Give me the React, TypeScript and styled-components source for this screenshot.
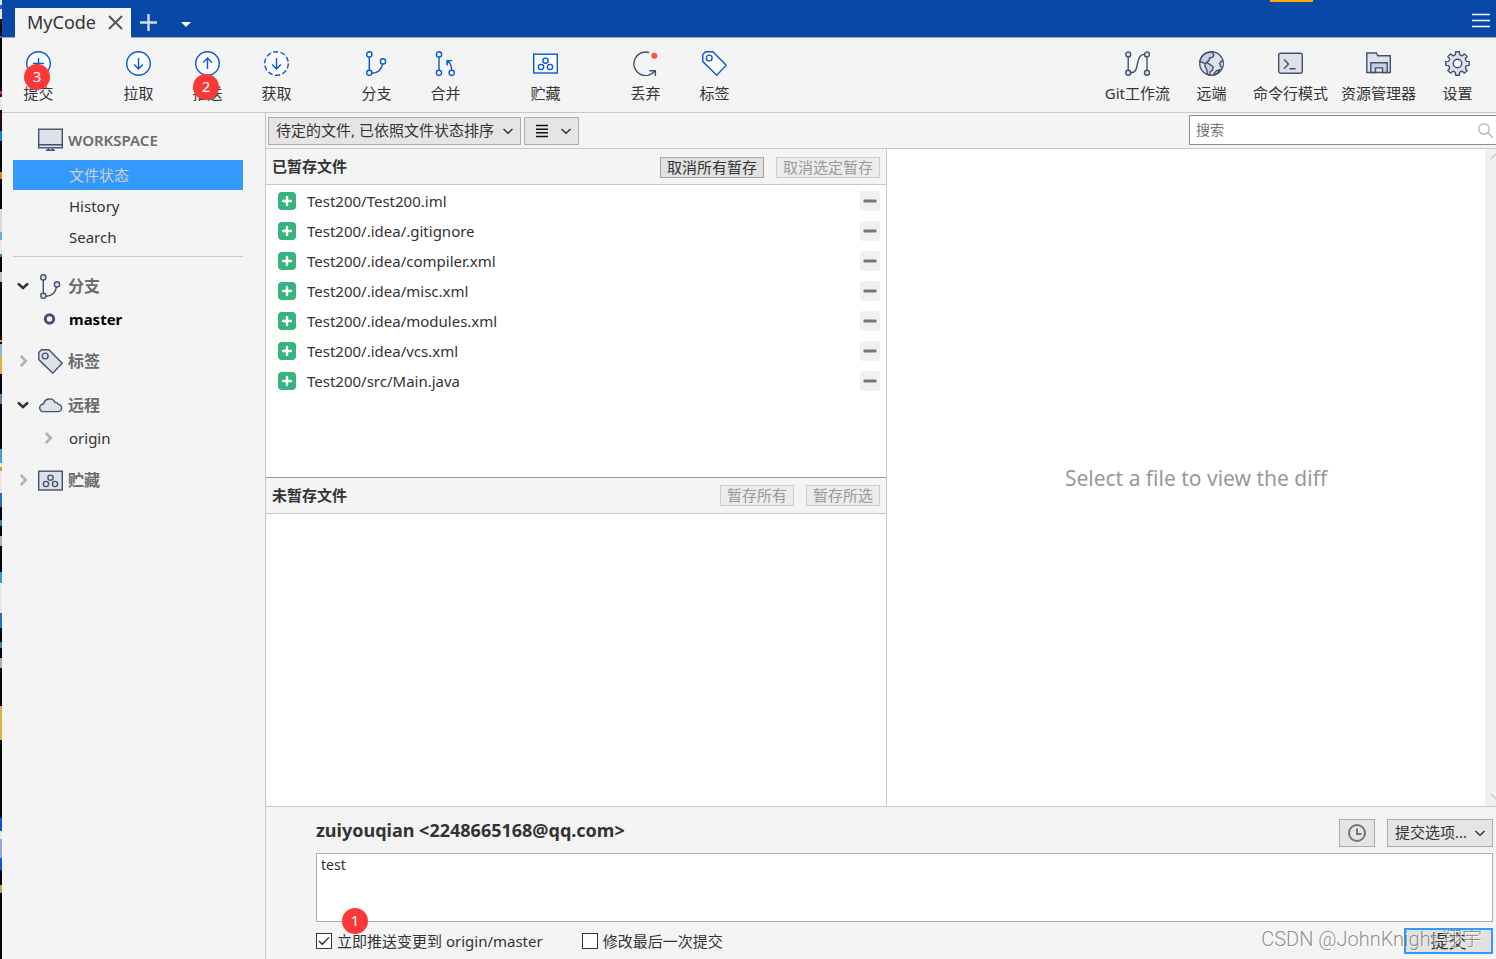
import React from 'react';
import styled, { createGlobalStyle, css } from 'styled-components';

const font = '"Noto Sans", "Noto Sans CJK SC", sans-serif';
const c = {
  brand: '#0747a6',
  panel: '#f4f4f4',
  line: '#c8c8c8',
  text: '#333333',
  muted: '#6b6b6b',
  control: '#e5e5e5',
  controlLine: '#acacac',
  blue: '#0b57d0',
  slate: '#42526e',
  slateFill: '#dfe1ea',
  select: '#3399ff',
  badge: '#fb3838',
};

const Global = createGlobalStyle`
  *, *::before, *::after { box-sizing: border-box; }
  body { margin: 0; background: ${c.panel}; color: ${c.text}; font: 15px/20px ${font}; }
  button, input, select, textarea { font: inherit; color: inherit; margin: 0; }
  button { cursor: pointer; }
  svg { display: block; flex: none; }
  ul { list-style: none; margin: 0; padding: 0; }
`;

const Screen = styled.div`
  display: flex;
  min-height: 100vh;
  overflow: hidden;
  position: relative;
`;

const DesktopEdge = styled.div`
  flex: none;
  width: 2px;
  background: linear-gradient(
    #e8e8e8 0 5px, #2b50ff 5px 9px, #e8e8e8 9px 19px, #04060f 19px 36px, #0a7fd0 36px 38px,
    #04060f 38px 91px, #f01890 91px 94px, #380818 94px 97px, #e8e8e8 97px 110px, #300818 110px 131px,
    #0a84d8 131px 141px, #04060f 141px 172px, #e08020 172px 179px, #04060f 179px 209px,
    #d8dcdc 209px 232px, #70a8d8 232px 240px, #e8e8e8 240px 254px, #20a050 254px 257px,
    #04060f 257px 272px, #b8c0c8 272px 282px, #04060f 282px 340px, #d8a020 340px 342px,
    #04060f 342px 344px, #8fb0e0 344px 356px, #e0b040 356px 374px, #04060f 374px 394px,
    #6080a0 394px 404px, #04060f 404px 449px, #40a0d8 449px 463px, #e8e8e8 463px 467px,
    #e0a020 467px 471px, #e8e8e8 471px 493px, #2a6cc0 493px 507px, #04060f 507px 520px,
    #4080b0 520px 526px, #04060f 526px 536px, #b0b0b0 536px 546px, #04060f 546px 572px,
    #30a0d0 572px 583px, #e8e8e8 583px 613px, #2a6cc0 613px 628px, #04060f 628px 642px,
    #4080b0 642px 648px, #04060f 648px 658px, #b0b0b0 658px 668px, #04060f 668px 706px,
    #e0b040 706px 740px, #04060f 740px 818px, #1050e0 818px 831px, #e8e8e8 831px 839px,
    #90a8e8 839px 858px, #1050e0 858px 870px, #04060f 870px 885px, #c0a060 885px 893px,
    #04060f 893px
  );
`;

const Window = styled.div`
  flex: 1;
  min-width: 0;
  display: flex;
  flex-direction: column;
`;

const TitleBar = styled.header`
  display: flex;
  align-items: flex-end;
  height: 38px;
  padding: 0 5px 0 13px;
  background: ${c.brand};
  border-bottom: 1px solid #a0aabb;
`;

const Tab = styled.div`
  display: flex;
  align-items: center;
  justify-content: space-between;
  width: 116px;
  height: 30px;
  margin-bottom: -1px;
  padding: 0 8px 2px 12px;
  background: ${c.panel};
  font-size: 18px;
`;

const BarButton = styled.button<{ $w: number }>`
  display: grid;
  place-items: center;
  width: ${(p) => p.$w}px;
  height: 29px;
  padding: 0;
  border: 0;
  background: none;
  color: #fff;
`;

const TabClose = styled(BarButton)`
  color: #555;
  height: 24px;
`;

const Spacer = styled.div`
  flex: 1;
`;

const DragMark = styled.span`
  position: absolute;
  top: 0;
  right: 183px;
  width: 43px;
  height: 2px;
  background: #ffab00;
`;

const Toolbar = styled.nav`
  display: flex;
  justify-content: space-between;
  height: 75px;
  padding: 0 4px 0 2px;
  border-bottom: 1px solid ${c.line};
`;

const ToolGroups = styled.div`
  display: flex;
  gap: 31px;
`;

const ToolGroup = styled.div<{ $gap?: number }>`
  display: flex;
  gap: ${(p) => p.$gap ?? 0}px;
`;

const ToolButton = styled.button`
  position: relative;
  display: flex;
  flex-direction: column;
  align-items: center;
  gap: 7px;
  min-width: 69px;
  padding: 13px 6px 0;
  border: 0;
  background: none;
  white-space: nowrap;
`;

const Badge = styled.span<{ $top: number; $left: number }>`
  position: absolute;
  top: ${(p) => p.$top}px;
  left: ${(p) => p.$left}px;
  width: 26px;
  height: 26px;
  border-radius: 50%;
  background: ${c.badge};
  color: #fff;
  font-size: 15px;
  line-height: 24px;
  text-align: center;
`;

const Body = styled.div`
  flex: 1;
  display: flex;
  min-height: 0;
`;

const Sidebar = styled.aside`
  flex: none;
  width: 264px;
  padding: 7px 22px 0 11px;
  border-right: 1px solid ${c.line};
`;

const SideHeading = styled.h2<{ $top?: number; $h?: number }>`
  display: grid;
  grid-template-columns: 25px 25px 1fr;
  align-items: center;
  column-gap: 0;
  height: ${(p) => p.$h ?? 30}px;
  margin: ${(p) => p.$top ?? 0}px 0 0;
  color: ${c.muted};
  font-size: 16px;
  font-weight: 600;
  line-height: 20px;

  & > span { padding-left: 5px; }
`;

const Workspace = styled(SideHeading)`
  font-size: 15px;
`;

const Toggle = styled.button`
  display: grid;
  place-items: center;
  width: 20px;
  height: 20px;
  padding: 0;
  border: 0;
  background: none;
`;

const SideLink = styled.a<{ $active?: boolean }>`
  display: block;
  height: 30px;
  margin-bottom: 1px;
  padding-left: 56px;
  line-height: 30px;
  color: ${c.text};
  text-decoration: none;
  ${(p) => p.$active && css`background: ${c.select}; color: #d0d0d0;`}
`;

const SideRule = styled.hr`
  height: 1px;
  margin: 4px 0 0;
  border: 0;
  background: ${c.line};
`;

const SideItem = styled.div<{ $bold?: boolean }>`
  display: grid;
  grid-template-columns: 25px 31px 1fr;
  align-items: center;
  height: 30px;
  margin-top: 3px;
  font-weight: ${(p) => (p.$bold ? 700 : 400)};
  color: ${(p) => (p.$bold ? '#000' : c.text)};

  & > :first-child { grid-column: 2; }
`;

const Main = styled.main`
  flex: 1;
  min-width: 0;
  display: flex;
  flex-direction: column;
`;

const FilterBar = styled.div`
  display: flex;
  align-items: flex-end;
  gap: 3px;
  height: 36px;
  padding: 0 0 3px 2px;
  border-bottom: 1px solid ${c.line};
`;

const SelectBox = styled.label<{ $w: number }>`
  display: grid;
  align-items: center;
  width: ${(p) => p.$w}px;
  height: 28px;

  & > * { grid-area: 1 / 1; }
  & > svg { justify-self: end; margin-right: 7px; pointer-events: none; }
`;

const Select = styled.select`
  appearance: none;
  width: 100%;
  height: 28px;
  padding: 0 20px 2px 7px;
  border: 1px solid ${c.controlLine};
  border-radius: 0;
  background: ${c.control};
`;

const PlainButton = styled.button<{ $w: number }>`
  display: flex;
  align-items: center;
  justify-content: center;
  width: ${(p) => p.$w}px;
  height: 28px;
  padding: 0;
  border: 1px solid ${c.controlLine};
  background: ${c.control};
`;

const ViewButton = styled(PlainButton)`
  justify-content: space-between;
  padding: 0 6px 0 11px;
`;

const SearchBox = styled.label`
  display: flex;
  align-items: center;
  width: 307px;
  height: 30px;
  padding: 0 3px 0 6px;
  border: 1px solid #8f8f8f;
  border-right: 0;
  background: #fff;
`;

const SearchInput = styled.input`
  flex: 1;
  min-width: 0;
  padding: 0;
  border: 0;
  outline: 0;
  background: none;
  font-size: 14px;
  &::placeholder { color: #757575; opacity: 1; }
`;

const Split = styled.div`
  flex: 1;
  display: grid;
  grid-template-columns: 621fr 609fr;
`;

const FilesPane = styled.div`
  display: grid;
  grid-template-rows: 1fr 1fr;
  border-right: 1px solid ${c.line};
`;

const FileSection = styled.section<{ $rule?: boolean }>`
  background: #fff;
  border-bottom: ${(p) => (p.$rule ? '1px solid #999' : '0')};
`;

const SectionHead = styled.header`
  display: flex;
  align-items: center;
  gap: 12px;
  height: 36px;
  padding: 1px 6px 0;
  background: ${c.panel};
  border-bottom: 1px solid ${c.line};
`;

const SectionTitle = styled.h3`
  flex: 1;
  margin: 0;
  padding-bottom: 2px;
  font-size: 15px;
  font-weight: 700;
  line-height: 20px;
`;

const StageButton = styled.button`
  height: 21px;
  padding: 0 6px;
  border: 1px solid #a5a5a5;
  background: #e1e1e1;
  line-height: 19px;
  white-space: nowrap;

  &:disabled {
    border-color: #cccccc;
    background: #ececec;
    color: #999;
  }
`;

const FileList = styled.ul`
  padding: 1px 6px 0 12px;
`;

const FileRow = styled.li`
  display: flex;
  align-items: center;
  height: 30px;
  gap: 11px;
  & > span { flex: 1; }
`;

const MinusButton = styled.button`
  display: grid;
  place-items: center;
  width: 20px;
  height: 20px;
  padding: 0;
  border: 0;
  border-radius: 3px;
  background: #f0f0f0;
`;

const DiffPane = styled.section`
  display: flex;
  background: #fff;
  overflow: hidden;
`;

const DiffHint = styled.p`
  flex: 1;
  align-self: center;
  margin: 0;
  padding-left: 20px;
  color: #999;
  font-size: 21px;
  line-height: 28px;
  text-align: center;
`;

const ScrollTrack = styled.div`
  display: flex;
  flex-direction: column;
  justify-content: space-between;
  width: 11px;
  padding: 4px 0 6px 6px;
  background: #f0f0f0;
`;

const Commit = styled.form`
  display: flex;
  flex-direction: column;
  gap: 6px;
  padding: 12px 3px 5px 50px;
  border-top: 1px solid ${c.line};
`;

const CommitRow = styled.div`
  display: flex;
  align-items: center;
  gap: 12px;
`;

const Author = styled.strong`
  flex: 1;
  font-size: 18px;
  line-height: 22px;
  padding-bottom: 6px;
`;

const MessageWrap = styled.div`
  position: relative;
  display: grid;
`;

const Message = styled.textarea`
  height: 69px;
  padding: 1px 4px;
  border: 1px solid #abadb3;
  background: #fff;
  resize: none;
  outline: 0;
  font-size: 14px;
  line-height: 20px;
`;

const OptionRow = styled.div`
  display: flex;
  align-items: center;
  justify-content: space-between;
  position: relative;
`;

const Options = styled.div`
  display: flex;
  gap: 39px;
`;

const CheckLabel = styled.label`
  display: flex;
  align-items: center;
  gap: 5px;
`;

const CheckBox = styled.span`
  display: grid;
  width: 16px;
  height: 16px;
  & > * { grid-area: 1 / 1; }
  & > svg { pointer-events: none; visibility: hidden; }
  & > input:checked + svg { visibility: visible; }
`;

const CheckInput = styled.input`
  appearance: none;
  width: 16px;
  height: 16px;
  border: 1px solid #333;
  background: #fff;
`;

const SubmitButton = styled.button`
  width: 89px;
  height: 26px;
  padding: 0;
  border: 2px solid ${c.select};
  background: #e1e1e1;
  font-size: 18px;
  line-height: 22px;
`;

const Watermark = styled.span`
  position: absolute;
  right: 11px;
  top: -1px;
  color: rgba(130, 130, 130, 0.9);
  font: 300 20px/24px Roboto, "Noto Sans CJK SC", sans-serif;
  text-shadow: 1px 1px 0 rgba(255, 255, 255, 0.8);
  white-space: nowrap;
  pointer-events: none;
`;

type IconProps = { tone?: 'blue' | 'slate'; size?: number };

function Icon({ tone = 'blue', size = 25, children }: IconProps & { children: React.ReactNode }) {
  return (
    <svg
      width={size}
      height={size}
      viewBox="0 0 25 25"
      fill={tone === 'blue' ? '#fbfcff' : c.slateFill}
      stroke={tone === 'blue' ? c.blue : c.slate}
      strokeWidth="1.4"
      aria-hidden="true"
    >
      {children}
    </svg>
  );
}

const CommitIcon = () => (
  <Icon><circle cx="12.5" cy="12.5" r="11.8" /><path d="M12.5 7v11M7 12.5h11" /></Icon>
);
const PullIcon = () => (
  <Icon><circle cx="12.5" cy="12.5" r="11.8" /><path fill="none" d="M12.5 7v11M8.2 13.6l4.3 4.3 4.3-4.3" /></Icon>
);
const PushIcon = () => (
  <Icon><circle cx="12.5" cy="12.5" r="11.8" /><path fill="none" d="M12.5 18V7M8.2 11.4l4.3-4.3 4.3 4.3" /></Icon>
);
const FetchIcon = () => (
  <Icon>
    <circle cx="12.5" cy="12.5" r="11.8" strokeDasharray="5 2.41" />
    <path fill="none" d="M12.5 7v11M8.2 13.6l4.3 4.3 4.3-4.3" />
  </Icon>
);
const BranchIcon = ({ tone }: IconProps) => (
  <Icon tone={tone}>
    <path fill="none" d="M5.3 5.8v13.8M7.9 22.3c5.6 0 10-3.6 10.6-9.5" />
    <circle cx="5.3" cy="3.4" r="2.6" /><circle cx="5.3" cy="21.8" r="2.6" /><circle cx="19" cy="10.4" r="2.6" />
  </Icon>
);
const MergeIcon = () => (
  <Icon>
    <path fill="none" d="M6 5.8v13.8M18.7 19.4c0-3.8-1.4-7.2-4-9.2M14.2 14.6V9.6h5" />
    <path fill={c.blue} stroke="none" d="M13.7 9.2h4l-4 4z" />
    <circle cx="6" cy="3.4" r="2.6" /><circle cx="6" cy="21.8" r="2.6" /><circle cx="18.7" cy="21.8" r="2.6" />
  </Icon>
);
const StashIcon = ({ tone }: IconProps) => (
  <Icon tone={tone}>
    <rect x="0.7" y="3.2" width="23.6" height="18.8" />
    <circle cx="12.5" cy="9.7" r="2.6" /><circle cx="8" cy="16" r="2.6" /><circle cx="17" cy="16" r="2.6" />
  </Icon>
);
const DiscardIcon = () => (
  <Icon tone="slate">
    <path fill="none" d="M16.2 1.5A11.8 11.8 0 1 0 22 20M16.4 19.7h6v5.3" />
    <circle cx="21.3" cy="4.7" r="3" fill="#ff5630" stroke="none" />
  </Icon>
);
const TagIcon = ({ tone }: IconProps) => (
  <Icon tone={tone}>
    <path d="M.8 3.4 3.6.8h7.2L24.2 14.2l-9.4 10L.8 10.6z" />
    <circle cx="7.2" cy="7" r="2.9" />
  </Icon>
);
const FlowIcon = () => (
  <Icon tone="slate">
    <path fill="none" d="M3.2 5.8v13.8M22 5.8v13.8M5.7 21.8c5.8 0 5.8-5 6.8-9.3s1.8-9 7-9.1" />
    <circle cx="3.2" cy="3.4" r="2.5" /><circle cx="3.2" cy="21.8" r="2.5" />
    <circle cx="22" cy="3.4" r="2.5" /><circle cx="22" cy="21.8" r="2.5" />
  </Icon>
);
const GlobeIcon = () => (
  <Icon tone="slate">
    <circle cx="12.5" cy="12.5" r="11.8" />
    <path fill="#c9cede" d="M6.5 2.3 13 .8l1.8 3-1 2.4-3.3.8-.4 2.4-2.7 2.2 2.2 1 4.6 3.2-.6 3.2-2.4 1.6-.6 3.4-2.2-.6-.6-5-2-3.2.6-2.6L1 10.5C1.6 7 3.6 4 6.5 2.3z" />
    <path fill="#c9cede" d="M24 10.2h-1.8l-1.4 2.2.8 3 1.8.8M15 22.5l2.4-2.6 3.4-1.2-2.6 3.8-3.2 1.6z" />
  </Icon>
);
const TerminalIcon = () => (
  <Icon tone="slate">
    <rect x="0.7" y="2.2" width="23.6" height="20" rx="2" />
    <path fill="none" d="m6 8.5 4.5 4.6L6 17.7M11.5 17.7h6" />
  </Icon>
);
const FolderIcon = () => (
  <Icon tone="slate">
    <path d="M.8 21.5V2h9.6l1.4 2.8h12.5v16.7z" />
    <path fill="#c9cede" d="M4.8 21.5v-9.8h16.4v9.8h-4.7v-4.6h-7v4.6z" />
  </Icon>
);

// Eight teeth: each spans 45 degrees, with a raised part and a valley.
const gearPath =
  Array.from({ length: 8 }, (_, i) => {
    const at = (deg: number, r: number) => {
      const a = ((i * 45 + deg) * Math.PI) / 180;
      return `${(12.5 + r * Math.sin(a)).toFixed(2)} ${(12.5 - r * Math.cos(a)).toFixed(2)}`;
    };
    return `${i ? 'L' : 'M'}${at(-13, 9.4)}L${at(-9, 11.9)}L${at(9, 11.9)}L${at(13, 9.4)}Q${at(22.5, 8)} ${at(32, 9.4)}`;
  }).join('') + 'z';

const GearIcon = () => (
  <Icon tone="slate"><path d={gearPath} strokeLinejoin="round" /><circle cx="12.5" cy="12.5" r="4.2" fill="#fff" /></Icon>
);
const MonitorIcon = () => (
  <Icon tone="slate">
    <rect x="0.7" y="1.2" width="23.6" height="18.6" />
    <path fill="none" d="M.7 16.7h23.6M8 22.3h9M10.5 20v2M14.5 20v2" />
  </Icon>
);
const CloudIcon = () => (
  <Icon tone="slate">
    <path d="M5.4 18.6h14.2a3.7 3.7 0 0 0 .6-7.4 3 3 0 0 0-3.2-1.8A6 6 0 0 0 5.6 11a3.8 3.8 0 0 0-.2 7.6z" />
  </Icon>
);

const Chevron = ({ open, small }: { open?: boolean; small?: boolean }) => (
  <svg width="12" height="12" viewBox="0 0 12 12" fill="none" stroke={open ? '#333' : '#b0b0b0'} strokeWidth={small ? 1.5 : 2.5} aria-hidden="true">
    <path d={open ? (small ? 'M1.5 4 6 8.2 10.5 4' : 'M1 3.5 6 8l5-4.5') : 'M3.8 1 8.8 6l-5 5'} />
  </svg>
);

const AddedIcon = () => (
  <svg width="18" height="18" viewBox="0 0 18 18" aria-hidden="true">
    <rect width="18" height="18" rx="4" fill="#36b37e" />
    <path d="M9 5v8M5 9h8" stroke="#fff" strokeWidth="2.4" strokeLinecap="round" />
  </svg>
);

const leftTools = [
  [{ label: '提交', icon: <CommitIcon />, badge: { n: 3, top: 26, left: 20 } }],
  [
    { label: '拉取', icon: <PullIcon /> },
    { label: '推送', icon: <PushIcon />, badge: { n: 2, top: 36, left: 20 } },
    { label: '获取', icon: <FetchIcon /> },
  ],
  [{ label: '分支', icon: <BranchIcon /> }, { label: '合并', icon: <MergeIcon /> }],
  [{ label: '贮藏', icon: <StashIcon /> }],
  [{ label: '丢弃', icon: <DiscardIcon /> }, { label: '标签', icon: <TagIcon /> }],
] as { label: string; icon: React.ReactNode; badge?: { n: number; top: number; left: number } }[][];

const rightTools = [
  { label: 'Git工作流', icon: <FlowIcon /> },
  { label: '远端', icon: <GlobeIcon /> },
  { label: '命令行模式', icon: <TerminalIcon /> },
  { label: '资源管理器', icon: <FolderIcon /> },
  { label: '设置', icon: <GearIcon /> },
];

const files = [
  'Test200/Test200.iml',
  'Test200/.idea/.gitignore',
  'Test200/.idea/compiler.xml',
  'Test200/.idea/misc.xml',
  'Test200/.idea/modules.xml',
  'Test200/.idea/vcs.xml',
  'Test200/src/Main.java',
];

function SideSection({ label, icon, open, top }: { label: string; icon: React.ReactNode; open?: boolean; top: number }) {
  return (
    <SideHeading $top={top}>
      <Toggle type="button" aria-label={label} aria-expanded={!!open}><Chevron open={open} /></Toggle>
      {icon}
      <span>{label}</span>
    </SideHeading>
  );
}

function Check({ label, checked }: { label: string; checked?: boolean }) {
  return (
    <CheckLabel>
      <CheckBox>
        <CheckInput type="checkbox" defaultChecked={checked} />
        <svg width="16" height="16" viewBox="0 0 16 16" fill="none" stroke="#222" strokeWidth="1.3" aria-hidden="true">
          <path d="m3 8 3.2 3.3L13 4.4" />
        </svg>
      </CheckBox>
      {label}
    </CheckLabel>
  );
}

export default function App() {
  return (
    <Screen>
      <Global />
      <DesktopEdge />
      <Window>
        <TitleBar>
          <Tab>
            MyCode
            <TabClose type="button" $w={15} aria-label="关闭">
              <svg width="15" height="15" viewBox="0 0 15 15" stroke="currentColor" strokeWidth="2"><path d="m1 1 13 13M14 1 1 14" /></svg>
            </TabClose>
          </Tab>
          <BarButton type="button" $w={35} aria-label="新建">
            <svg width="17" height="17" viewBox="0 0 17 17" stroke="#cfdcf2" strokeWidth="2.4"><path d="M8.5 0v17M0 8.5h17" /></svg>
          </BarButton>
          <BarButton type="button" $w={39} aria-label="更多">
            <svg width="10" height="8" viewBox="0 0 10 8" fill="#fff"><path d="M0 3h10L5 8z" /></svg>
          </BarButton>
          <Spacer />
          <BarButton type="button" $w={20} aria-label="菜单">
            <svg width="18" height="19" viewBox="0 0 18 19" stroke="#fff" strokeWidth="1.5"><path d="M0 1.5h18M0 7.5h18M0 13.5h18" /></svg>
          </BarButton>
        </TitleBar>
        <DragMark />

        <Toolbar>
          <ToolGroups>
            {leftTools.map((group, i) => (
              <ToolGroup key={i}>
                {group.map((t) => (
                  <ToolButton type="button" key={t.label}>
                    {t.icon}
                    {t.label}
                    {t.badge && <Badge $top={t.badge.top} $left={t.badge.left}>{t.badge.n}</Badge>}
                  </ToolButton>
                ))}
              </ToolGroup>
            ))}
          </ToolGroups>
          <ToolGroup $gap={1}>
            {rightTools.map((t) => (
              <ToolButton type="button" key={t.label}>{t.icon}{t.label}</ToolButton>
            ))}
          </ToolGroup>
        </Toolbar>

        <Body>
          <Sidebar>
            <Workspace $h={40}><i /><MonitorIcon /><span>WORKSPACE</span></Workspace>
            <SideLink href="#status" $active>文件状态</SideLink>
            <SideLink href="#history">History</SideLink>
            <SideLink href="#search">Search</SideLink>
            <SideRule />
            <SideSection label="分支" icon={<BranchIcon tone="slate" />} open top={14} />
            <SideItem $bold>
              <svg width="24" height="14" viewBox="0 0 24 14" fill="none" stroke={c.slate} strokeWidth="3"><circle cx="11.5" cy="7" r="4.2" /></svg>
              master
            </SideItem>
            <SideSection label="标签" icon={<TagIcon tone="slate" />} top={12} />
            <SideSection label="远程" icon={<CloudIcon />} open top={14} />
            <SideItem>
              <Toggle type="button" aria-label="origin" aria-expanded={false}><Chevron /></Toggle>
              origin
            </SideItem>
            <SideSection label="贮藏" icon={<StashIcon tone="slate" />} top={12} />
          </Sidebar>

          <Main>
            <FilterBar>
              <SelectBox $w={253}>
                <Select aria-label="排序"><option>待定的文件, 已依照文件状态排序</option></Select>
                <Chevron open small />
              </SelectBox>
              <ViewButton type="button" $w={55} aria-label="列表视图">
                <svg width="12" height="14" viewBox="0 0 12 14" stroke="#111" strokeWidth="1.4"><path d="M0 1.5h12M0 5.2h12M0 8.8h12M0 12.5h12" /></svg>
                <Chevron open small />
              </ViewButton>
              <Spacer />
              <SearchBox>
                <SearchInput type="text" placeholder="搜索" aria-label="搜索" />
                <svg width="15" height="15" viewBox="0 0 15 15" fill="none" stroke="#b8b8b8" strokeWidth="1.4" aria-hidden="true"><circle cx="6" cy="6" r="5.2" /><path d="m9.8 9.8 4.8 4.8" /></svg>
              </SearchBox>
            </FilterBar>

            <Split>
              <FilesPane>
                <FileSection $rule>
                  <SectionHead>
                    <SectionTitle>已暂存文件</SectionTitle>
                    <StageButton type="button">取消所有暂存</StageButton>
                    <StageButton type="button" disabled>取消选定暂存</StageButton>
                  </SectionHead>
                  <FileList>
                    {files.map((f) => (
                      <FileRow key={f}>
                        <AddedIcon />
                        <span>{f}</span>
                        <MinusButton type="button" aria-label={`取消暂存 ${f}`}>
                          <svg width="14" height="4" viewBox="0 0 14 4"><rect x="0.5" y="0.5" width="13" height="3" rx="1" fill="#757575" /></svg>
                        </MinusButton>
                      </FileRow>
                    ))}
                  </FileList>
                </FileSection>
                <FileSection>
                  <SectionHead>
                    <SectionTitle>未暂存文件</SectionTitle>
                    <StageButton type="button" disabled>暂存所有</StageButton>
                    <StageButton type="button" disabled>暂存所选</StageButton>
                  </SectionHead>
                </FileSection>
              </FilesPane>
              <DiffPane>
                <DiffHint>Select a file to view the diff</DiffHint>
                <ScrollTrack>
                  <svg width="5" height="7" viewBox="0 0 5 7" fill="none" stroke="#c8c8c8" strokeWidth="1.5"><path d="m0 6 5-5" /></svg>
                  <svg width="5" height="7" viewBox="0 0 5 7" fill="none" stroke="#c8c8c8" strokeWidth="1.5"><path d="m0 1 5 5" /></svg>
                </ScrollTrack>
              </DiffPane>
            </Split>

            <Commit onSubmit={(e) => e.preventDefault()}>
              <CommitRow>
                <Author>zuiyouqian &lt;2248665168@qq.com&gt;</Author>
                <PlainButton type="button" $w={36} aria-label="历史信息">
                  <svg width="18" height="18" viewBox="0 0 18 18" fill="none" stroke="#757575" strokeWidth="2"><circle cx="9" cy="9" r="8" /><path d="M9 4.5V10h4.5" /></svg>
                </PlainButton>
                <SelectBox $w={106}>
                  <Select aria-label="提交选项"><option>提交选项...</option></Select>
                  <Chevron open small />
                </SelectBox>
              </CommitRow>
              <MessageWrap>
                <Message aria-label="提交信息" defaultValue="test" />
                <Badge $top={55} $left={26}>1</Badge>
              </MessageWrap>
              <OptionRow>
                <Options>
                  <Check label="立即推送变更到 origin/master" checked />
                  <Check label="修改最后一次提交" />
                </Options>
                <SubmitButton type="submit">提交</SubmitButton>
                <Watermark>CSDN @JohnKnight 翔宇</Watermark>
              </OptionRow>
            </Commit>
          </Main>
        </Body>
      </Window>
    </Screen>
  );
}
